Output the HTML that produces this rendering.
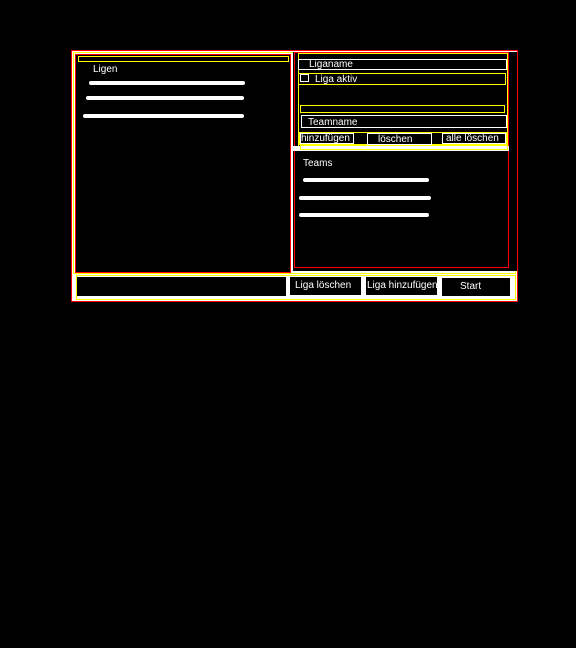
<html><head><style>
body{margin:0;width:576px;height:648px;background:#000;position:relative;overflow:hidden;font-family:"Liberation Sans","DejaVu Sans",sans-serif;color:#fff;font-size:10px}
div{position:absolute;box-sizing:border-box}
.r{border:1px solid #f00}.y{border:1px solid #ff0}.w{border:1px solid #fff}
.b{background:#000}.bar{background:#fff;height:4px;border-radius:2px}
.t{white-space:nowrap;line-height:12px}
</style></head><body>
<div class="r" style="left:71px;top:50px;width:447px;height:252px;background:#fff"></div>
<div class="y" style="left:73px;top:52px;width:443px;height:222px"></div>
<div style="left:74px;top:53px;width:218px;height:220px;background:#fff"></div>
<div class="b r" style="left:75px;top:54px;width:216px;height:219px"></div>
<div class="y" style="left:78px;top:56px;width:211px;height:6px"></div>
<div class="t" style="left:93px;top:64px">Ligen</div>
<div class="bar" style="left:89px;top:81px;width:156px"></div>
<div class="bar" style="left:86px;top:96px;width:158px"></div>
<div class="bar" style="left:83px;top:114px;width:161px"></div>

<div class="b" style="left:293px;top:52px;width:224px;height:219px"></div>
<div class="r" style="left:294px;top:52px;width:215px;height:216px"></div>
<div class="y" style="left:298px;top:53px;width:210px;height:96px"></div>
<div class="w" style="left:298px;top:59px;width:209px;height:11px"></div>
<div class="t" style="left:309px;top:59px">Liganame</div>
<div class="y" style="left:298px;top:73px;width:208px;height:12px"></div>
<div class="w" style="left:300px;top:74px;width:9px;height:8px"></div>
<div class="t" style="left:315px;top:74px">Liga aktiv</div>
<div class="y" style="left:300px;top:105px;width:205px;height:8px"></div>
<div class="w" style="left:301px;top:115px;width:206px;height:13px"></div>
<div class="t" style="left:308px;top:117px">Teamname</div>
<div class="y" style="left:299px;top:132px;width:208px;height:13px"></div>
<div class="w t" style="left:300px;top:133px;width:54px;height:11px;line-height:10px">hinzufügen</div>
<div class="w t" style="left:367px;top:133px;width:65px;height:12px;line-height:12px;padding-left:10px">löschen</div>
<div class="w t" style="left:442px;top:133px;width:64px;height:11px;line-height:10px;padding-left:3px">alle löschen</div>
<div style="left:293px;top:146px;width:216px;height:5px;background:#fff"></div>
<div class="y" style="left:300px;top:145px;width:208px;height:5px"></div>
<div class="b" style="left:295px;top:152px;width:213px;height:115px"></div>
<div class="t" style="left:303px;top:158px">Teams</div>
<div class="bar" style="left:303px;top:178px;width:126px"></div>
<div class="bar" style="left:299px;top:196px;width:132px"></div>
<div class="bar" style="left:299px;top:213px;width:130px"></div>

<div class="y" style="left:76px;top:275px;width:440px;height:25px"></div>
<div class="b" style="left:77px;top:277px;width:209px;height:19px"></div>
<div class="b t" style="left:290px;top:277px;width:71px;height:18px;line-height:18px;padding-left:5px">Liga löschen</div>
<div class="b t" style="left:366px;top:277px;width:71px;height:18px;line-height:18px;padding-left:1px;overflow:hidden">Liga hinzufügen</div>
<div class="b t" style="left:442px;top:278px;width:68px;height:18px;line-height:18px;padding-left:18px">Start</div>
</body></html>
